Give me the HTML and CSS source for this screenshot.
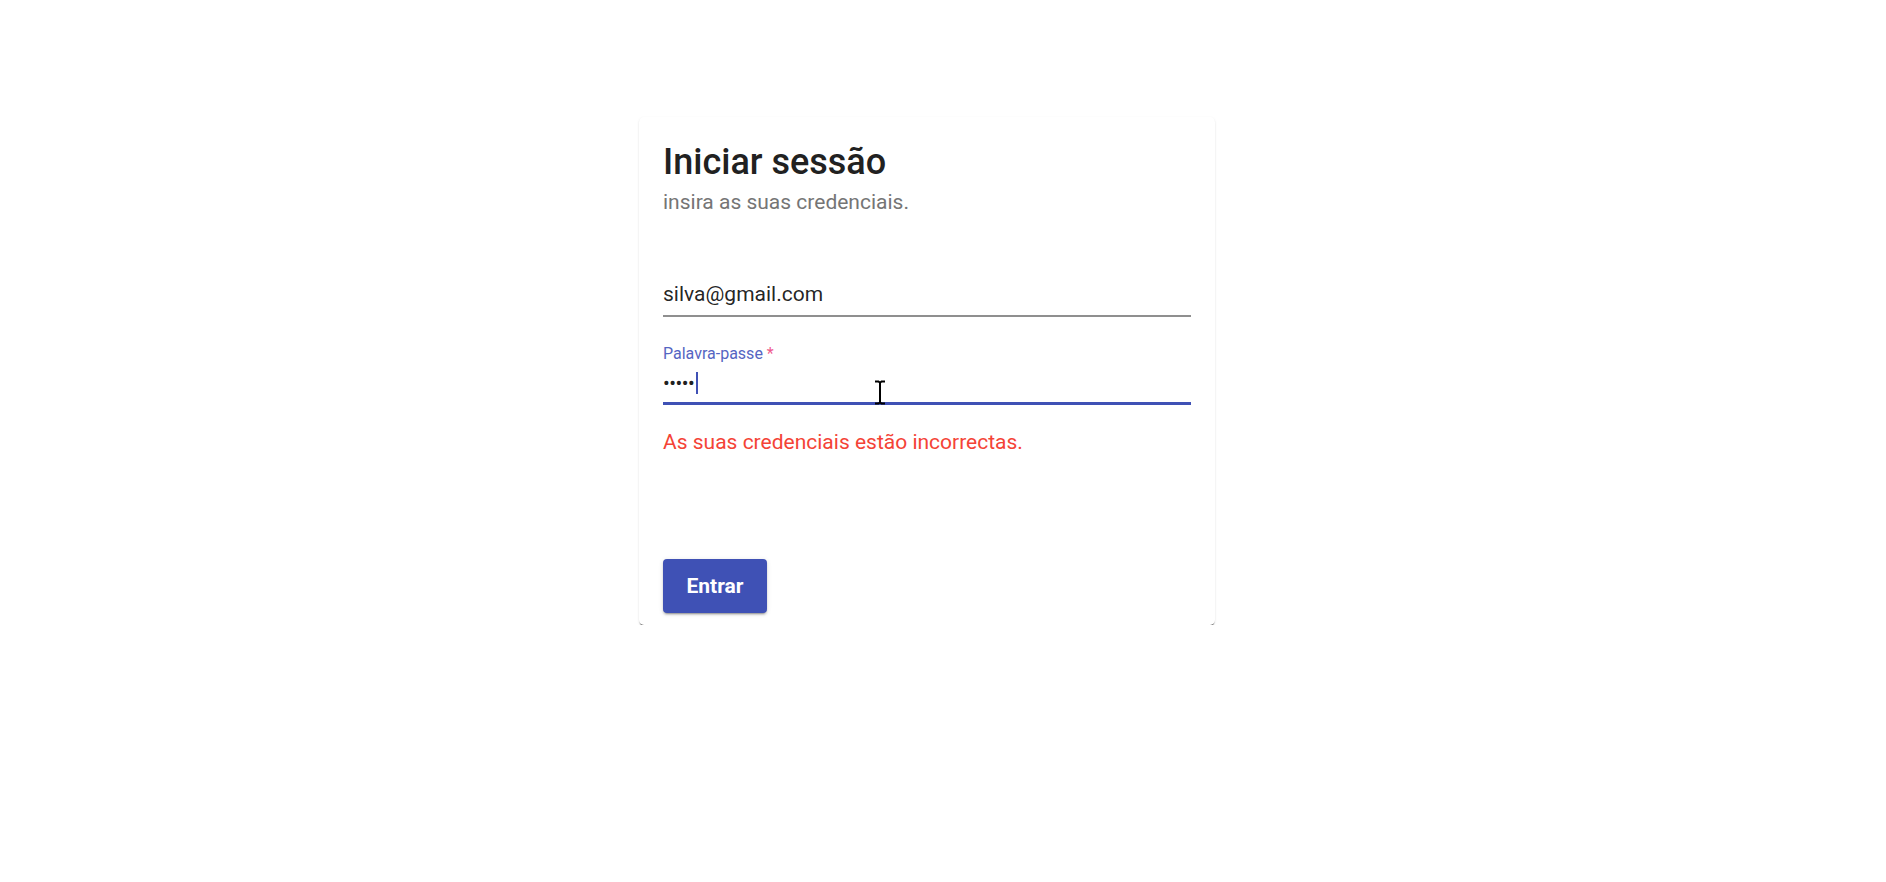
FILE: index.html
```html
<!DOCTYPE html>
<html lang="pt">
<head>
<meta charset="utf-8">
<title>Iniciar sessão</title>
<link rel="stylesheet" href="styles.css">
</head>
<body>
<main class="page">
  <section class="card">
    <header class="card-header">
      <h1 class="title">Iniciar sessão</h1>
      <p class="subtitle">insira as suas credenciais.</p>
    </header>
    <form class="form">
      <div class="field">
        <div class="input input-idle">silva@gmail.com</div>
      </div>
      <div class="field field-focused">
        <label class="label">Palavra-passe <span class="asterisk">*</span></label>
        <div class="input input-focused"><span class="dots">•••••</span><span class="caret"></span></div>
        <svg class="ibeam" width="14" height="25" viewBox="0 0 14 25" aria-hidden="true">
          <path d="M2 1.5h3.5l1.5 1.2 1.5-1.2H12M7 2.7v19.6M2 23.5h3.5l1.5-1.2 1.5 1.2H12" fill="none" stroke="#000" stroke-width="2"/>
        </svg>
      </div>
      <p class="error">As suas credenciais estão incorrectas.</p>
    </form>
    <div class="actions">
      <button class="btn" type="button">Entrar</button>
    </div>
  </section>
</main>
</body>
</html>
```
FILE: styles.css
```css
html, body {
  margin: 0;
  padding: 0;
  background: #ffffff;
}

body {
  font-family: Roboto, "Liberation Sans", Arial, sans-serif;
  color: rgba(0, 0, 0, 0.87);
}

.page {
  padding: 117px 0 0 639px;
}

.card {
  width: 576px;
  box-sizing: border-box;
  height: 508px;
  padding: 24px 24px 12px;
  background: #fff;
  border-radius: 5px;
  box-shadow: 0 2px 1px -1px rgba(0, 0, 0, 0.5),
              0 1px 1px 0 rgba(0, 0, 0, 0.12),
              0 1px 3px 0 rgba(0, 0, 0, 0.08);
  display: flex;
  flex-direction: column;
}

.card-header {
  display: flex;
  flex-direction: column;
}

.title {
  margin: 0;
  font-size: 36px;
  font-weight: 500;
  line-height: 43px;
  color: #212121;
}

.subtitle {
  margin: 3px 0 0;
  font-size: 21px;
  line-height: 30px;
  color: #757575;
}

.form {
  display: flex;
  flex-direction: column;
  margin-top: 65px;
}

.field {
  position: relative;
  display: flex;
  flex-direction: column;
}

.field-focused {
  margin-top: 29px;
}

.label {
  font-size: 16px;
  line-height: 15px;
  color: #5565c2;
  margin-bottom: 10px;
}

.asterisk {
  color: #ee5b8e;
}

.input {
  font-size: 21px;
  line-height: 24px;
  height: 24px;
  display: flex;
  align-items: center;
}

.input-idle {
  padding-bottom: 9px;
  border-bottom: 2px solid #8f8f8f;
}

.input-focused {
  padding-bottom: 7px;
  border-bottom: 3px solid #3f51b5;
}

.dots {
  color: #212121;
  font-size: 20px;
  letter-spacing: -0.5px;
}

.caret {
  display: inline-block;
  width: 2px;
  height: 22px;
  margin-left: 2px;
  background: #3f51b5;
}

.ibeam {
  position: absolute;
  left: 210px;
  top: 34px;
}

.error {
  margin: 22px 0 0;
  font-size: 21px;
  line-height: 30px;
  color: #f44336;
}

.actions {
  margin-top: auto;
  display: flex;
}

.btn {
  width: 104px;
  height: 54px;
  border: 0;
  border-radius: 4px;
  background: #3f51b5;
  color: #fff;
  font-family: Roboto, "Liberation Sans", Arial, sans-serif;
  font-size: 21px;
  font-weight: 700;
  padding: 0;
  box-shadow: 0 3px 1px -2px rgba(0, 0, 0, 0.2),
              0 2px 2px 0 rgba(0, 0, 0, 0.14),
              0 1px 5px 0 rgba(0, 0, 0, 0.12);
  cursor: pointer;
}
```
